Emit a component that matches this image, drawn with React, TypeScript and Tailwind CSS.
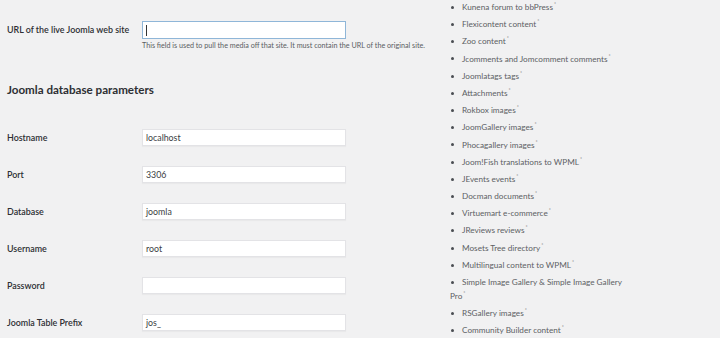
const fields = [
  { label: "Hostname", value: "localhost" },
  { label: "Port", value: "3306" },
  { label: "Database", value: "joomla" },
  { label: "Username", value: "root" },
  { label: "Password", value: "" },
  { label: "Joomla Table Prefix", value: "jos_" },
];

const features = [
  "Kunena forum to bbPress",
  "Flexicontent content",
  "Zoo content",
  "Jcomments and Jomcomment comments",
  "Joomlatags tags",
  "Attachments",
  "Rokbox images",
  "JoomGallery images",
  "Phocagallery images",
  "Joom!Fish translations to WPML",
  "JEvents events",
  "Docman documents",
  "Virtuemart e-commerce",
  "JReviews reviews",
  "Mosets Tree directory",
  "Multilingual content to WPML",
  "Simple Image Gallery & Simple Image Gallery Pro",
  "RSGallery images",
  "Community Builder content",
];

function FieldRow({ label, value }: { label: string; value: string }) {
  return (
    <div className="flex h-[37px] items-center">
      <label className="w-[135px] text-[8.9px] font-semibold text-[#2d2f33]">{label}</label>
      <div className="flex h-[17px] w-[204px] items-center border border-[#e3e3e6] bg-white px-[3px] text-[8.8px] text-[#3a3d42] shadow-[0_1px_1px_rgba(0,0,0,0.03)]">
        {value}
      </div>
    </div>
  );
}

export default function App() {
  return (
    <div
      className="flex h-[338px] w-[720px] overflow-hidden bg-[#f1f1f2]"
      style={{ fontFamily: "Lato, 'Open Sans', sans-serif" }}
    >
      <div className="w-[448px] shrink-0 pl-[7px] pt-[21px]">
        <div className="flex items-center">
          <label className="w-[135px] text-[8.9px] font-semibold text-[#2d2f33]">
            URL of the live Joomla web site
          </label>
          <div className="flex h-[18px] w-[204px] items-center border border-[#8fb6d8] bg-white px-[3px]">
            <span className="h-[11px] w-px bg-[#333]" />
          </div>
        </div>
        <p className="ml-[135px] mt-[2px] text-[7.2px] leading-[10px] text-[#5a5d62]">
          This field is used to pull the media off that site. It must contain the URL of the original site.
        </p>

        <h2 className="mt-[30px] text-[11.6px] font-bold text-[#2d2f33]">Joomla database parameters</h2>

        <div className="mt-[21px]">
          {fields.map((f) => (
            <FieldRow key={f.label} label={f.label} value={f.value} />
          ))}
        </div>
      </div>

      <ul className="w-[178px] pl-[2px] pt-0 text-[8.2px] leading-[14px] text-[#5c5f64]">
        {features.map((item) => (
          <li key={item} className="mb-[3.2px]">
            <span className="mb-[1px] ml-[1px] mr-[8px] inline-block h-[3px] w-[3px] rounded-full bg-[#4a4d52] align-middle" />
            {item}
            <span className="ml-[1px] inline-block align-top text-[5px] leading-[8px] text-[#777]">*</span>
          </li>
        ))}
      </ul>
    </div>
  );
}
